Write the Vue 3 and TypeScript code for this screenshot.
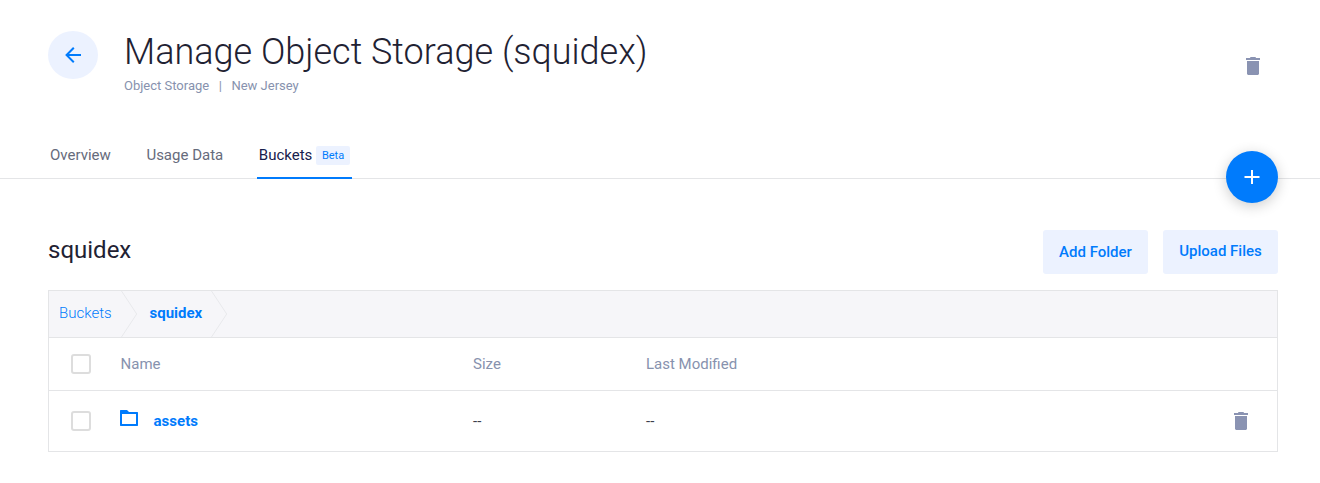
<script setup lang="ts">
interface Tab {
  label: string
  badge?: string
  active?: boolean
}

interface Entry {
  name: string
  size: string
  modified: string
}

const tabs: Tab[] = [
  { label: 'Overview' },
  { label: 'Usage Data' },
  { label: 'Buckets', badge: 'Beta', active: true },
]

const entries: Entry[] = [{ name: 'assets', size: '--', modified: '--' }]
</script>

<template>
  <div class="page">
    <header class="header">
      <button class="back" aria-label="Back">
        <svg width="24" height="24" viewBox="0 0 24 24">
          <path d="M20 11v2H8l5.5 5.5-1.42 1.42L4.16 12l7.92-7.92L13.5 5.5 8 11h12z" />
        </svg>
      </button>
      <div class="heading">
        <h1>Manage Object Storage (squidex)</h1>
        <p class="meta"><span>Object Storage</span><span class="sep">|</span><span>New Jersey</span></p>
      </div>
      <button class="icon-button header-delete" aria-label="Delete storage">
        <svg class="trash" width="24" height="24" viewBox="0 0 24 24">
          <path d="M5 4h4l.5-1h5l.5 1h4v2H5zM6 7h12v13l-1 1H7l-1-1z" />
        </svg>
      </button>
    </header>

    <nav class="tabs">
      <a v-for="tab in tabs" :key="tab.label" class="tab" :class="{ active: tab.active }">
        <span>{{ tab.label }}</span>
        <span v-if="tab.badge" class="badge">{{ tab.badge }}</span>
      </a>
      <button class="fab" aria-label="Add">
        <svg width="24" height="24" viewBox="0 0 24 24">
          <path d="M19.5 13H13v6h-2v-6H4.500v-2H11V5h2v6h6.500z" />
        </svg>
      </button>
    </nav>

    <main class="content">
      <div class="toolbar">
        <h2>squidex</h2>
        <button class="action add-folder">Add Folder</button>
        <button class="action upload">Upload Files</button>
      </div>

      <section class="panel">
        <div class="crumbs">
          <a class="crumb-root">Buckets</a>
          <svg class="chevron" width="17" height="46" viewBox="0 0 17 46">
            <path d="M0.5 0L15.7 23L0.5 46" />
          </svg>
          <a class="crumb-current">squidex</a>
          <svg class="chevron" width="17" height="46" viewBox="0 0 17 46">
            <path d="M0.5 0L15.7 23L0.5 46" />
          </svg>
        </div>

        <div class="row head">
          <span class="checkbox"></span>
          <span class="name">Name</span>
          <span>Size</span>
          <span>Last Modified</span>
        </div>

        <div v-for="entry in entries" :key="entry.name" class="row item">
          <span class="checkbox"></span>
          <span class="name">
            <svg class="folder" width="18" height="16" viewBox="0 0 18 16">
              <path fill-rule="evenodd" d="M.5 0H7l2 2h8.500l.5.500v13l-.5.500H.5l-.5-.5V.5zM2 4v10h14V4z" />
            </svg>
            <a>{{ entry.name }}</a>
          </span>
          <span>{{ entry.size }}</span>
          <span>{{ entry.modified }}</span>
          <button class="icon-button" aria-label="Delete folder">
            <svg class="trash" width="24" height="24" viewBox="0 0 24 24">
              <path d="M5 4h4l.5-1h5l.5 1h4v2H5zM6 7h12v13l-1 1H7l-1-1z" />
            </svg>
          </button>
        </div>
      </section>
    </main>
  </div>
</template>

<style>
body {
  background: #fff;
}
</style>

<style scoped>
.page {
  box-sizing: border-box;
  width: 1320px;
  height: 483px;
  overflow: hidden;
  font-family: Roboto, "Liberation Sans", sans-serif;
  font-size: 15px;
  line-height: 20px;
  color: #1f2233;
}
button {
  border: 0;
  padding: 0;
  font: inherit;
}
svg {
  display: block;
}
h1,
h2,
p {
  margin: 0;
}
.header {
  display: flex;
  align-items: flex-start;
  height: 133px;
  padding: 0 48px;
}
.back {
  display: flex;
  align-items: center;
  justify-content: center;
  width: 50px;
  height: 48px;
  margin-top: 31px;
  border-radius: 50%;
  background: #ecf2ff;
  fill: #007bfc;
}
.heading {
  flex: 1;
  margin: 31px 0 0 26px;
}
h1 {
  font-size: 36px;
  font-weight: 300;
  line-height: 42px;
}
.meta {
  display: flex;
  margin-top: 3px;
  font-size: 13px;
  color: #8792ae;
}
.sep {
  margin: 0 9.5px;
}
.icon-button {
  background: none;
}
.trash {
  fill: #8a93b2;
}
.header-delete {
  margin: 54px 7px 0 0;
}
.tabs {
  display: flex;
  gap: 31.6px;
  height: 45px;
  padding: 0 42px 0 48px;
  border-bottom: 1px solid #e4e5e7;
}
.tab {
  display: flex;
  box-sizing: border-box;
  height: 46px;
  padding: 12px 2px 0;
  color: #666b7c;
}
.tab.active {
  width: 94.8px;
  border-bottom: 2px solid #007bfc;
  color: #17204d;
}
.badge {
  box-sizing: border-box;
  width: 34px;
  height: 19px;
  margin: 1px 0 0 3.6px;
  padding-left: 6px;
  border-radius: 2px;
  background: #ecf2ff;
  color: #007bfc;
  font-size: 11px;
  line-height: 19px;
}
.fab {
  display: flex;
  flex: none;
  align-items: center;
  justify-content: center;
  width: 52px;
  height: 52px;
  margin: 18px 0 0 auto;
  border-radius: 50%;
  background: #007bfc;
  fill: #fff;
  box-shadow: 0 3px 14px rgba(0, 0, 0, 0.2);
}
.content {
  padding: 51px 42px 0 48px;
}
.toolbar {
  display: flex;
  height: 44px;
}
h2 {
  flex: 1;
  font-size: 24px;
  font-weight: 400;
  line-height: 40px;
}
.action {
  height: 44px;
  border-radius: 3px;
  background: #ecf2ff;
  color: #007bfc;
  font-weight: 500;
}
.add-folder {
  width: 105px;
}
.upload {
  width: 115px;
  margin-left: 15px;
  padding-bottom: 2px;
}
.panel {
  margin-top: 16px;
  border: 1px solid #e4e5e7;
}
.crumbs {
  display: flex;
  height: 46px;
  padding-left: 10px;
  border-bottom: 1px solid #e4e5e7;
  background: #f6f6f9;
  line-height: 44px;
  color: #007bfc;
}
.crumb-root {
  width: 62px;
  font-weight: 300;
}
.crumb-current {
  width: 61.5px;
  margin-left: 11.5px;
  font-weight: 700;
}
.chevron {
  fill: none;
  stroke: #e8e9ec;
}
.row {
  display: grid;
  grid-template-columns: 49px 353px 173px 1fr auto;
  align-items: center;
  padding: 0 24px 0 22px;
}
.head {
  height: 52px;
  border-bottom: 1px solid #e4e5e7;
  color: #8792ae;
}
.item {
  height: 60px;
  color: #3c3f4c;
}
.checkbox {
  box-sizing: border-box;
  width: 20px;
  height: 20px;
  border: 2px solid #ddd;
  border-radius: 3px;
}
.name {
  display: flex;
  align-items: center;
  color: #007bfc;
  font-weight: 700;
}
.head .name {
  padding-left: 0.6px;
  color: inherit;
  font-weight: 400;
}
.folder {
  margin: -6px 15.6px 0 0;
  fill: #007bfc;
}
</style>
